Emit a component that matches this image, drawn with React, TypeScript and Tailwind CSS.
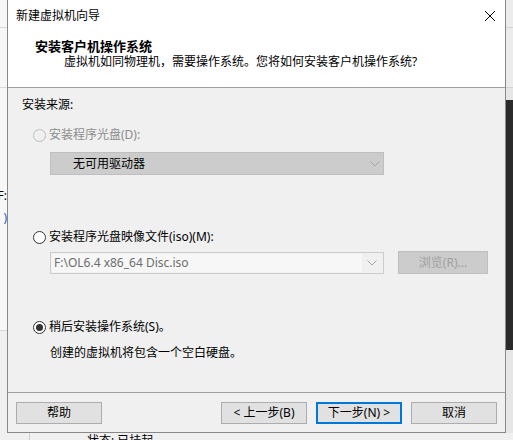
import React from 'react';

const font = "font-['Noto_Sans','Noto_Sans_CJK_SC',sans-serif]";

const Radio: React.FC<{ checked?: boolean; disabled?: boolean }> = ({ checked, disabled }) => (
  <span
    className={`flex items-center justify-center w-[13px] h-[13px] rounded-full border ${
      disabled ? 'border-[#bcbcbc] bg-[#f0f0f0]' : 'border-[#333333] bg-white'
    }`}
  >
    {checked && <span className="w-[7px] h-[7px] rounded-full bg-[#333333]" />}
  </span>
);

const Chevron: React.FC<{ color: string }> = ({ color }) => (
  <svg width="10" height="6" viewBox="0 0 10 6" fill="none">
    <path d="M0.5 0.5 L5 5 L9.5 0.5" stroke={color} strokeWidth="1" />
  </svg>
);

const Btn: React.FC<{ label: string; primary?: boolean }> = ({ label, primary }) => (
  <div
    className={`w-[86px] h-[22px] flex items-center justify-center bg-[#e1e1e1] text-[12px] text-black ${
      primary ? 'border-2 border-[#0078d7]' : 'border border-[#adadad]'
    }`}
  >
    {label}
  </div>
);

const App: React.FC = () => {
  return (
    <div className={`w-[513px] h-[440px] overflow-hidden bg-[#f0f0f0] flex flex-col ${font}`}>
      <div className="flex h-[433px]">
        {/* window behind, left side */}
        <div className="w-[7px] flex flex-col bg-[#f7f7f7] overflow-hidden">
          <div className="h-[28px] border-b border-[#d9d9d9]" />
          <div className="h-[60px] border-b border-[#d9d9d9]" />
          <div className="h-[100px]" />
          <div className="flex justify-end text-[12px] leading-[16px] text-black whitespace-nowrap">F:</div>
          <div className="h-[6px]" />
          <div className="flex justify-end text-[12px] leading-[16px] text-[#1e5bc6] whitespace-nowrap">)</div>
          <div className="h-[105px] border-b border-[#d9d9d9]" />
          <div className="flex-1 bg-[#f0f0f0]" />
        </div>

        {/* dialog */}
        <div className="w-[499px] flex flex-col border-x border-b border-[#888888] bg-[#f0f0f0] text-[12px] text-black leading-[16px]">
          {/* title bar */}
          <div className="h-[31px] bg-white flex items-center justify-between pl-[8px] pr-[10px]">
            <span className="text-[12px]">新建虚拟机向导</span>
            <svg width="10" height="10" viewBox="0 0 10 10">
              <path d="M0 0 L10 10 M10 0 L0 10" stroke="#000" strokeWidth="1" />
            </svg>
          </div>

          {/* header */}
          <div className="h-[57px] bg-white border-b border-[#a0a0a0] flex flex-col">
            <div className="mt-[7px] ml-[27px] text-[13px] font-bold leading-[16px]">安装客户机操作系统</div>
            <div className="mt-[1px] ml-[56px] leading-[14px]">
              虚拟机如同物理机，需要操作系统。您将如何安装客户机操作系统?
            </div>
          </div>

          {/* body */}
          <div className="flex-1 flex flex-col">
            <div className="mt-[9px] ml-[14px]">安装来源:</div>

            <div className="mt-[14px] ml-[25px] flex items-center gap-[3px] text-[#8c8c8c]">
              <Radio disabled />
              <span>安装程序光盘(D):</span>
            </div>

            <div className="mt-[9px] ml-[42px] w-[334px] h-[23px] bg-[#cccccc] border border-[#bfbfbf] flex items-center justify-between pl-[22px] pr-[3px]">
              <span>无可用驱动器</span>
              <Chevron color="#a5a5a5" />
            </div>

            <div className="mt-[54px] ml-[25px] flex items-center gap-[3px]">
              <Radio />
              <span>安装程序光盘映像文件(iso)(M):</span>
            </div>

            <div className="mt-[6px] ml-[42px] flex items-start gap-[14px]">
              <div className="mt-[1px] w-[334px] h-[22px] border border-[#cccccc] bg-[#f0f0f0] flex items-stretch p-[1px]">
                <div className="flex-1 bg-[#f7f7f7] flex items-center pl-[2px] text-[#6d6d6d]">
                  F:\OL6.4 x86_64 Disc.iso
                </div>
                <div className="w-[20px] flex items-center justify-center">
                  <Chevron color="#a5a5a5" />
                </div>
              </div>
              <div className="w-[90px] h-[23px] bg-[#cccccc] border border-[#bfbfbf] flex items-center justify-center text-[#a0a0a0]">
                浏览(R)...
              </div>
            </div>

            <div className="mt-[45px] ml-[25px] flex items-center gap-[3px]">
              <Radio checked />
              <span>稍后安装操作系统(S)。</span>
            </div>

            <div className="mt-[10px] ml-[42px]">创建的虚拟机将包含一个空白硬盘。</div>
          </div>

          {/* footer */}
          <div className="h-[40px] border-t border-[#a0a0a0] flex items-start pt-[9px] px-[8px]">
            <Btn label="帮助" />
            <div className="flex-1" />
            <div className="flex gap-[9px]">
              <Btn label="< 上一步(B)" />
              <Btn label="下一步(N) >" primary />
              <Btn label="取消" />
            </div>
          </div>
        </div>

        {/* window behind, right side */}
        <div className="flex-1 flex flex-col">
          <div className="h-[28px] bg-[#ececec] border-b border-[#d4d4d4]" />
          <div className="h-[60px] bg-[#ececec] border-b border-[#d4d4d4]" />
          <div className="h-[12px] bg-[#e6e6e6]" />
          <div className="h-[250px] bg-[#2b2b2b]" />
          <div className="flex-1 bg-[#e6e6e6]" />
        </div>
      </div>

      {/* window behind, bottom */}
      <div className="flex-1 flex overflow-hidden bg-[#f0f0f0]">
        <div className="w-[30px] border-r border-[#d0d0d0]" />
        <div className="ml-[57px] text-[12px] leading-[16px] text-black">状态: 已挂起</div>
      </div>
    </div>
  );
};

export default App;
